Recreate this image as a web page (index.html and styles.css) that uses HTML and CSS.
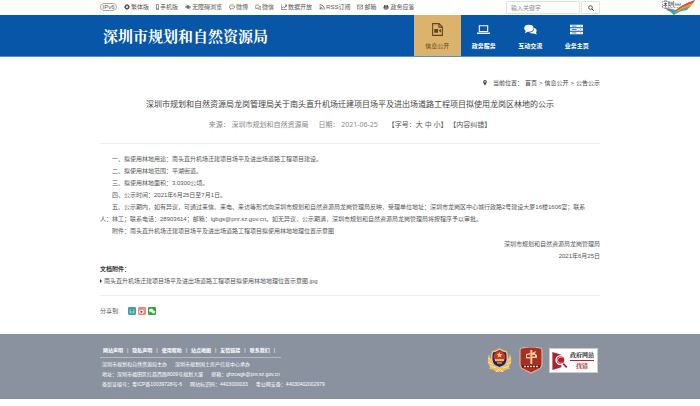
FILE: index.html
```html
<!DOCTYPE html>
<html lang="zh-CN">
<head>
<meta charset="utf-8">
<meta name="viewport" content="width=device-width, initial-scale=1">
<title>深圳市规划和自然资源局</title>
<link rel="stylesheet" href="styles.css">
</head>
<body>
<div class="topbar">
  <div class="topbar-main">
    <nav class="tools">
      <a class="pill" href="#">IPv6</a>
      <a href="#"><svg viewBox="0 0 12 12"><circle cx="6" cy="6" r="3.6" fill="none" stroke="currentColor" stroke-width="2.6"/><path d="M6 0v12M0 6h12M2 2l8 8M10 2l-8 8" stroke="currentColor" stroke-width="1.5"/><circle cx="6" cy="6" r="2" fill="#fff"/></svg>繁体版</a>
      <a href="#"><svg class="slim" viewBox="0 0 6 12"><path d="M1 1h4v10H1z" fill="none" stroke="currentColor" stroke-width="1.2"/><path d="M1 9h4" stroke="currentColor"/></svg>手机版</a>
      <a href="#"><svg viewBox="0 0 12 12"><path d="M0.5 6Q6 0 11.500 6Q6 12 .5 6z" fill="none" stroke="currentColor" stroke-width="1.4"/><circle cx="6" cy="6" r="2.200" fill="currentColor"/><path d="M3 1l6 10" stroke="currentColor" stroke-width="1.3"/></svg>无障碍浏览</a>
      <a href="#"><svg viewBox="0 0 12 12"><path d="M3 9Q.7 8 .7 5.500C.7 .5 11.300 .5 11.300 5.500C11.300 9 8 9.500 5.500 9.300L2 11z" fill="none" stroke="currentColor" stroke-width="1.200"/><path d="M3.300 5.500h1.200m1 0h1.200m1 0h1.200" stroke="currentColor" stroke-width="1.300"/></svg>微博</a>
      <a href="#"><svg viewBox="0 0 12 12"><path d="M2 8Q.7 7 .7 5C.7 .8 9 .8 9 5C9 8 6 8.500 4.500 8L1.500 9.500z" fill="none" stroke="currentColor" stroke-width="1.200"/><path d="M10 4Q13 7 10.500 9l.7 2-2.500-1Q6 10.500 5 9.500" fill="none" stroke="currentColor" stroke-width="1.200"/></svg>微信</a>
      <a href="#"><svg viewBox="0 0 12 12"><path d="M.7 1v10H12" fill="none" stroke="currentColor" stroke-width="1.200"/><path d="M2 8.500l3-3 2 2 4-5M8 2h3.300v3.300" fill="none" stroke="currentColor" stroke-width="1.700"/></svg>数据开放</a>
      <a href="#"><svg viewBox="0 0 12 12"><circle cx="2.500" cy="9.500" r="1.500" fill="currentColor"/><path d="M1 5.500Q6.500 5.500 6.500 11M1 1.500Q10.500 1.500 10.500 11" fill="none" stroke="currentColor" stroke-width="1.700"/></svg>RSS订阅</a>
      <a href="#"><svg viewBox="0 0 12 12"><path d="M.7 2h10.600v8H.7zM1 3l5 4 5-4" fill="none" stroke="currentColor" stroke-width="1.200"/></svg>邮箱</a>
      <a href="#"><svg viewBox="0 0 12 12"><path d="M2 5V2h8v3h1v4H9v2H3V9H1V5z" fill="currentColor"/><path d="M4 3.500h4M4 8h4" stroke="#fff" stroke-width="1.200"/></svg>政务应答</a>
    </nav>
    <form class="search">
      <input type="text" placeholder="输入关键字" aria-label="输入关键字">
      <button type="button" aria-label="搜索"><svg viewBox="0 0 12 12"><circle cx="5" cy="5" r="3.700" fill="none" stroke="currentColor" stroke-width="1.600"/><path d="M8 8l3.500 3.500" stroke="currentColor" stroke-width="2"/></svg></button>
    </form>
  </div>
  <svg class="city" viewBox="0 0 34 15" aria-hidden="true">
    <path d="M2 8Q9 8 15 10Q21 5 34 0L26 10Q18 11 13 15Q9 10 2 8z" fill="#3a9fd6"/>
    <path d="M15 10Q22 4 34 0L32 3Q22 6 14 12z" fill="#e5482d"/>
    <path d="M14 12Q22 6 32 3L30 6Q22 8 14 13z" fill="#f3a02f"/>
    <path d="M14 13Q22 8 30 6L28 8Q20 10 13 14z" fill="#6cb344"/>
    <path d="M2 8Q10 8 14 12L13 13Q9 9 2 8z" fill="#e9564a"/>
    <path d="M5 10Q10 11 13 15L14 12Q10 9 5 10z" fill="#37a7a0"/>
    <path d="M1 1.500l1 .8M1 4l1 .5M1 7l1.500-2M3 2V1h3v1M3 3.500h3M4.500 2.500V7M4.500 4L3 6M4.500 4L6 6M8 1v5M7 3h2M7 6l2-.5M10 1.500Q10.500 5 9.500 6.500M11.200 2v3.500M12.700 1v6" stroke="#444" stroke-width=".7" fill="none"/>
    <path d="M14 4h1.500m.8 0h1.500m.8 0H20M14 5h6" stroke="#666" stroke-width=".8"/>
    <path d="M1 7.500h19" stroke="#777" stroke-width=".6" stroke-dasharray="1 .5"/>
  </svg>
</div>

<header class="banner">
  <div class="wrap banner-in">
    <h1>深圳市规划和自然资源局</h1>
    <nav class="mainnav">
      <a class="on" href="#"><svg viewBox="0 0 12 12"><path d="M1.500.6h6l3 3v7.800h-9z M7.300.6v3.200h3.200" fill="none" stroke="currentColor"/><path d="M3 5.500h3.500v3.500H3zM7 7l2.300-1.500V9z" fill="currentColor"/></svg>信息公开</a>
      <a href="#"><svg viewBox="0 0 14 12"><path d="M2.500 2h9v6.200h-9z" fill="none" stroke="currentColor" stroke-width="1.200"/><path d="M0 9.300h14v1.500H0z" fill="currentColor"/></svg>政务服务</a>
      <a href="#"><svg viewBox="0 0 14 12"><ellipse cx="5.300" cy="4.700" rx="5" ry="3.700" fill="currentColor"/><path d="M2 7L1 10l4-2zM11 4Q15 6 13 9l.7 2.500-3-1.200Q7 10.500 5.500 9.200Q11 9 11 4z" fill="currentColor"/></svg>互动交流</a>
      <a href="#"><svg viewBox="0 0 14 12"><path d="M0 1h14v2.700H0zM0 4.700h14v2.700H0zM0 8.400h14v2.700H0z" fill="currentColor"/><path d="M2 2.300h5M2 6h5M2 9.700h5M11 2.300h1M11 6h1M11 9.700h1" stroke="#0756a8" stroke-width=".8"/></svg>业务主页</a>
    </nav>
  </div>
</header>

<main class="wrap">
  <nav class="crumbs"><svg viewBox="0 0 8 12"><path d="M4 0a3.600 3.600 0 0 0-3.600 3.600C.4 6 4 11.500 4 11.500S7.600 6 7.600 3.600A3.600 3.600 0 0 0 4 0z" fill="currentColor"/><circle cx="4" cy="3.700" r="1.500" fill="#fff"/></svg><span>当前位置：</span><a href="#">首页</a> &gt; <a href="#">信息公开</a> &gt; <a href="#">公告公示</a></nav>
  <article>
    <h2>深圳市规划和自然资源局龙岗管理局关于南头直升机场迁建项目场平及进出场道路工程项目拟使用龙岗区林地的公示</h2>
    <div class="meta">
      <span>来源： 深圳市规划和自然资源局</span>
      <span>日期： 2021-06-25</span>
      <span class="ops">【字号：<a href="#">大</a> <a href="#">中</a> <a href="#">小</a>】 <a href="#">【内容纠错】</a></span>
    </div>
    <div class="content">
      <p>一、拟使用林地用途：南头直升机场迁建项目场平及进出场道路工程项目建设。</p>
      <p>二、拟使用林地范围：平湖街道。</p>
      <p>三、拟使用林地面积：3.0300公顷。</p>
      <p>四、公示时间：2021年6月25日至7月1日。</p>
      <p>五、公示期内，如有异议，可通过来信、来电、来访等形式向深圳市规划和自然资源局龙岗管理局反映，受理单位地址：深圳市龙岗区中心城行政路2号建设大厦16楼1606室；联系<br>人：林工；联系电话：28903614；邮箱：lgbgs@pnr.sz.gov.cn。如无异议，公示期满，深圳市规划和自然资源局龙岗管理局将按程序予以审批。</p>
      <p>附件：南头直升机场迁建项目场平及进出场道路工程项目拟使用林地地理位置示意图</p>
    </div>
    <div class="sign"><p>深圳市规划和自然资源局龙岗管理局</p><p>2021年6月25日</p></div>
    <div class="files">
      <h3>文档附件：</h3>
      <a href="#">南头直升机场迁建项目场平及进出场道路工程项目拟使用林地地理位置示意图.jpg</a>
    </div>
  </article>
  <div class="share">
    <span>分享到:</span>
    <a href="#" aria-label="腾讯微博"><svg viewBox="0 0 14 14"><rect width="14" height="14" rx="2" fill="#3c9fba"/><path d="M3 4h8v7H3z" fill="#b9dc91"/><path d="M7 3v9M4 5l3 2 3-2" stroke="#287f9b" stroke-width="1.500" fill="none"/></svg></a>
    <a href="#" aria-label="新浪微博"><svg viewBox="0 0 14 14"><rect width="14" height="14" rx="2" fill="#e88783"/><ellipse cx="6" cy="8.500" rx="4.500" ry="3.500" fill="#fff"/><circle cx="6" cy="8.500" r="2" fill="#b82d32"/><path d="M8 3q4-1 4 4" stroke="#f4c15e" stroke-width="1.500" fill="none"/></svg></a>
    <a href="#" aria-label="微信"><svg viewBox="0 0 14 14"><rect width="14" height="14" rx="2" fill="#2ba52c"/><ellipse cx="5.500" cy="5.500" rx="3.700" ry="3" fill="#fff"/><ellipse cx="9.200" cy="8.700" rx="3.200" ry="2.600" fill="#fff"/><path d="M3 7v3l2-2zM10 10l2 2v-3z" fill="#fff"/></svg></a>
  </div>
</main>

<footer class="footer">
  <div class="wrap footer-in">
    <div class="info">
      <nav class="links"><a href="#">网站声明</a><a href="#">隐私声明</a><a href="#">使用帮助</a><a href="#">站点地图</a><a href="#">友情链接</a><a href="#">联系我们</a></nav>
      <p><span>深圳市规划和自然资源局主办</span><span>深圳市规划国土房产信息中心承办</span></p>
      <p><span>地址：深圳市福田区红荔西路8009号规划大厦</span><span>邮箱：ghzcwgk@pnr.sz.gov.cn</span></p>
      <p><span>备案证编号：粤ICP备10039728号-6</span><span>网站标识码：4403000033</span><span>粤公网安备：44030402002979</span></p>
    </div>
    <div class="badges">
      <svg class="police" viewBox="0 0 27 27" aria-hidden="true">
        <path d="M3 7Q0 15 4 20L3 22Q8 22 10 25H17Q19 22 24 22L23 20Q27 15 24 7L20 19H7z" fill="#e8bd65"/>
        <path d="M2 11l5 4M2 15l6 3M4 19l6 2M25 11l-5 4M25 15l-6 3M23 19l-6 2M10 25l3-3M17 25l-3-3" stroke="#f8e6a7" stroke-width="1"/>
        <path d="M13.500 1Q17 4 21 4Q24 14 19 19L13.500 22L8 19Q3 14 6 4Q10 4 13.500 1z" fill="#edc46b"/>
        <path d="M13.500 3Q17 5 20 5.500Q22 14 18 18L13.500 20L9 18Q5 14 7 5.500Q10 5 13.500 3z" fill="#1d2661"/>
        <circle cx="13.500" cy="10" r="6" fill="#cf302c"/>
        <path d="M13.500 5l.9 1.900 2 .2-1.500 1.400.4 2-1.800-1-1.800 1 .4-2L10.600 7l2-.2z" fill="#f3cd59"/>
        <path d="M9 12h9v2H9z" fill="#edc46b"/><path d="M11 16h5" stroke="#edc46b"/>
      </svg>
      <div class="party">
        <svg viewBox="0 0 24 27" aria-hidden="true">
          <path d="M3 1Q12-1 21 1Q23 1 23 4V17Q23 21 18 23L12 26L6 23Q1 21 1 17V4Q1 1 3 1z" fill="#a43124" stroke="#e0af93" stroke-width="1.200"/>
          <path d="M11.300 3h2v14h-2zM7 7l4-1v1.500L8 8v2h3v1.500H7zM13 6l4-2-1 3 2 1v3h-5V9.500h3V8h-3z" fill="#f1c9a2"/>
          <path d="M3 18h18v3H3z" fill="#702018"/><path d="M5 19.500h2m1 0h2m1 0h2m1 0h2m1 0h2" stroke="#f1c9a2" stroke-width="1.500"/>
        </svg>
      </div>
      <a class="report" href="#">
        <svg viewBox="0 0 18 20" aria-hidden="true"><path d="M0 0l10 3v14L0 20z" fill="#b51f2e"/><circle cx="9" cy="9" r="5" fill="#b51f2e" stroke="#fff" stroke-width="1.500"/><path d="M12 13l4 4" stroke="#b51f2e" stroke-width="2"/><path d="M11 6a3.500 3.500 0 1 0 0 6" fill="none" stroke="#eecbd0"/></svg>
        <span class="report-text"><b>政府网站</b><strong>找错</strong></span>
      </a>
    </div>
  </div>
</footer>
</body>
</html>
```
FILE: styles.css
```css
* { box-sizing: border-box; }
body {
  margin: 0;
  background: #fff;
  color: #555;
  font-family: "Liberation Sans", "Noto Sans CJK SC", sans-serif;
  font-size: 6px;
  line-height: 12px;
}
h1, h2, h3, p { margin: 0; }
a { color: inherit; text-decoration: none; }
svg { display: block; flex: none; }
.wrap { max-width: 500px; margin: 0 auto; }

.topbar {
  display: grid;
  grid-template-columns: 1fr minmax(0, 500px) 1fr;
  height: 15px;
}
.topbar-main {
  grid-column: 2;
  display: flex;
  justify-content: space-between;
}
.tools { display: flex; align-items: center; gap: 7px; height: 13px; white-space: nowrap; }
.tools a { display: flex; align-items: center; gap: 1px; }
.tools svg { width: 6px; height: 6px; }
.tools .slim { width: 3px; }
.tools .pill {
  width: 17px;
  height: 8px;
  justify-content: center;
  border: 1px solid #aaa;
  border-radius: 4px;
  line-height: 6px;
}
.search { display: flex; gap: 1px; padding-top: 1px; }
.search input, .search button {
  height: 13px;
  border: 1px solid #e2e2e2;
  border-radius: 1px;
  background: #fff;
  font: inherit;
}
.search input { width: 74px; padding: 0 4px; }
.search input::placeholder { color: #888; opacity: 1; }
.search button {
  display: flex;
  align-items: center;
  justify-content: center;
  width: 19px;
  padding: 0;
  color: #333;
}
.search button svg { width: 6px; height: 6px; }
.city { grid-column: 3; justify-self: end; width: 34px; height: 15px; margin-right: 5px; }

.banner { background: #0756a8; border-bottom: 1px solid #5c91c4; }
.banner-in { display: flex; justify-content: space-between; align-items: center; }
.banner h1 {
  padding-left: 3px;
  color: #fff;
  font-family: "Noto Serif CJK SC", "Noto Sans CJK SC", serif;
  font-size: 15px;
  line-height: 20px;
}
.mainnav { display: grid; grid-template-columns: repeat(4, 1fr); width: 186px; }
.mainnav a {
  display: flex;
  flex-direction: column;
  align-items: center;
  gap: 4px;
  height: 41px;
  padding-top: 8px;
  color: #fff;
  font-weight: bold;
}
.mainnav svg { width: 13px; height: 13px; }
.mainnav .on { background: #dcb36d; color: #60451c; font-weight: normal; }

.crumbs {
  display: flex;
  justify-content: flex-end;
  gap: 2px;
  align-items: center;
  padding-top: 20px;
  color: #444;
}
.crumbs svg { width: 4px; height: 6px; margin-right: 4px; }
h2 {
  padding-top: 7px;
  color: #444;
  font-family: "Noto Sans CJK SC", sans-serif;
  font-size: 8px;
  font-weight: normal;
  line-height: 16px;
  text-align: center;
}
.meta {
  display: flex;
  justify-content: center;
  gap: 10px;
  padding: 7px 0 12px;
  border-bottom: 1px solid #eee;
  color: #888;
  font-family: "Noto Sans", "Noto Sans CJK SC", sans-serif;
  font-size: 7px;
}
.ops { color: #555; }
.content { padding-top: 9px; }
.content p { text-indent: 12px; white-space: nowrap; }
.sign { padding-top: 1px; text-align: right; }
.files { padding: 1px 0 8px; border-bottom: 1px solid #eee; }
.files h3 { color: #333; font-size: 6px; }
.files a { display: flex; align-items: center; gap: 2px; }
.files a::before {
  content: "";
  border: 2px solid transparent;
  border-left-color: #333;
  border-right: 0;
}
.share { display: flex; align-items: center; gap: 2px; padding: 9px 0 17px; }
.share span { margin-right: 6px; }
.share svg { width: 8px; height: 8px; }

.footer {
  margin-bottom: 8px;
  background: #8a929f;
  color: #fff;
  font-size: 5px;
  line-height: 10px;
}
.footer-in { display: flex; justify-content: space-between; align-items: flex-start; padding: 11px 0 10px; }
.info { display: flex; flex-direction: column; align-items: flex-start; white-space: nowrap; }
.info p { display: flex; gap: 8px; padding-left: 2px; }
.links {
  display: flex;
  margin-bottom: 1px;
  padding: 0 2px 2px 3px;
  border-bottom: 1px solid #b5bac3;
  font-weight: bold;
}
.links a::after { content: "|"; margin: 0 4px; font-weight: normal; }
.badges { display: flex; align-items: center; gap: 6px; padding: 2px 2px 0; }
.police { width: 27px; height: 27px; }
.party svg { width: 24px; height: 27px; }
.report {
  display: flex;
  align-items: center;
  gap: 1px;
  width: 49px;
  height: 25px;
  padding: 0 2px;
  border: 1px solid #ccc;
  background: #fff;
}
.report svg { width: 17px; height: 18px; }
.report-text { display: flex; flex-direction: column; align-items: center; color: #222; font-family: "Noto Serif CJK SC", "Noto Sans CJK SC", serif; font-size: 6px; line-height: 10px; white-space: nowrap; }
.report-text b { border-bottom: 1px solid #b51f2e; }
.report-text strong { color: #b51f2e; }
```
